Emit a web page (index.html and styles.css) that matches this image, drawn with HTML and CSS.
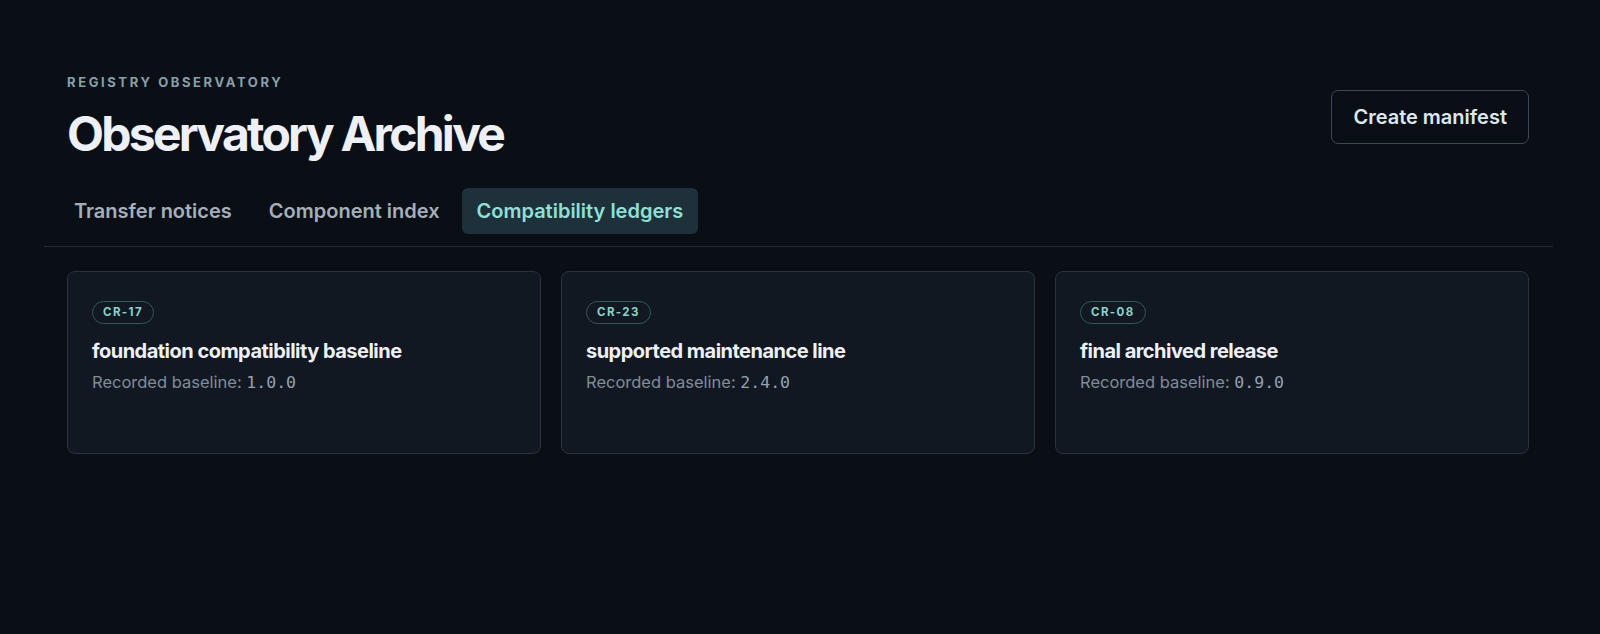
FILE: index.html
```html
<!DOCTYPE html>
<html lang="en">
<head>
    <meta charset="UTF-8">
    <meta name="viewport" content="width=device-width, initial-scale=1.0">
    <title>Observatory Archive</title>
    <link rel="stylesheet" href="styles.css">
</head>
<body>
    <div class="page">
        <div class="header">
            <div class="heading">
                <p class="eyebrow">Registry observatory</p>
                <h1>Observatory Archive</h1>
            </div>
            <button class="btn-outline" type="button">Create manifest</button>
        </div>

        <div class="tabs">
            <a href="#" class="tab">Transfer notices</a>
            <a href="#" class="tab">Component index</a>
            <a href="#" class="tab active">Compatibility ledgers</a>
        </div>

        <div class="cards">
            <div class="card">
                <span class="badge">CR-17</span>
                <h3>foundation compatibility baseline</h3>
                <p class="meta">Recorded baseline: <code>1.0.0</code></p>
            </div>
            <div class="card">
                <span class="badge">CR-23</span>
                <h3>supported maintenance line</h3>
                <p class="meta">Recorded baseline: <code>2.4.0</code></p>
            </div>
            <div class="card">
                <span class="badge">CR-08</span>
                <h3>final archived release</h3>
                <p class="meta">Recorded baseline: <code>0.9.0</code></p>
            </div>
        </div>
    </div>
</body>
</html>
```

FILE: styles.css
```css
/* Fondo oscuro general */
body {
    background-color: #0a0f16;
    color: #eef0f7;
    font-family: Inter, "Noto Sans", sans-serif;
    margin: 0;
    padding: 0;
}

.page {
    padding: 74px 71px 0 67px;
}

/* Encabezado */
.header {
    display: flex;
    align-items: center;
    justify-content: space-between;
}

.eyebrow {
    margin: 0 0 18px;
    font-size: 13px;
    line-height: 16px;
    font-weight: 700;
    letter-spacing: 0.2em;
    text-transform: uppercase;
    color: #86a0ac;
}

h1 {
    margin: 0;
    font-size: 48px;
    line-height: 1.1;
    font-weight: 700;
    letter-spacing: -0.057em;
    color: #eef0f7;
}

.btn-outline {
    font-family: inherit;
    font-size: 20px;
    line-height: 24px;
    font-weight: 600;
    color: #dde7ee;
    background-color: transparent;
    border: 1px solid #3a4755;
    border-radius: 7px;
    padding: 14px 21px;
    cursor: pointer;
}

/* Pestañas */
.tabs {
    display: flex;
    gap: 7px;
    margin: 27px -24px 0 -23px;
    padding: 0 15px 12px;
    border-bottom: 1px solid #222b36;
}

.tab {
    font-size: 20px;
    line-height: 24px;
    font-weight: 600;
    color: #a5afbb;
    text-decoration: none;
    padding: 11px 15px;
    border-radius: 6px;
}

.tab.active {
    background-color: #1e303a;
    color: #8fe0d5;
}

/* Tarjetas */
.cards {
    display: grid;
    grid-template-columns: repeat(3, 1fr);
    gap: 20px;
    margin-top: 24px;
}

.card {
    box-sizing: border-box;
    min-height: 183px;
    padding: 28px 24px;
    background-color: #111821;
    border: 1px solid #29333e;
    border-radius: 8px;
}

.badge {
    display: inline-block;
    font-size: 11.5px;
    line-height: 15px;
    font-weight: 700;
    letter-spacing: 0.12em;
    color: #84d6c9;
    padding: 3px 10px;
    border: 1px solid #2f5a57;
    border-radius: 999px;
}

.card h3 {
    margin: 13px 0 0;
    font-size: 20px;
    line-height: 28px;
    font-weight: 700;
    letter-spacing: -0.026em;
    color: #eef0f7;
}

.meta {
    margin: 5px 0 0;
    font-size: 16.5px;
    line-height: 24px;
    color: #808c9a;
}

.meta code {
    font-family: "DejaVu Sans Mono", "Liberation Mono", monospace;
    font-size: 16.5px;
    color: #96a1ae;
}
```
